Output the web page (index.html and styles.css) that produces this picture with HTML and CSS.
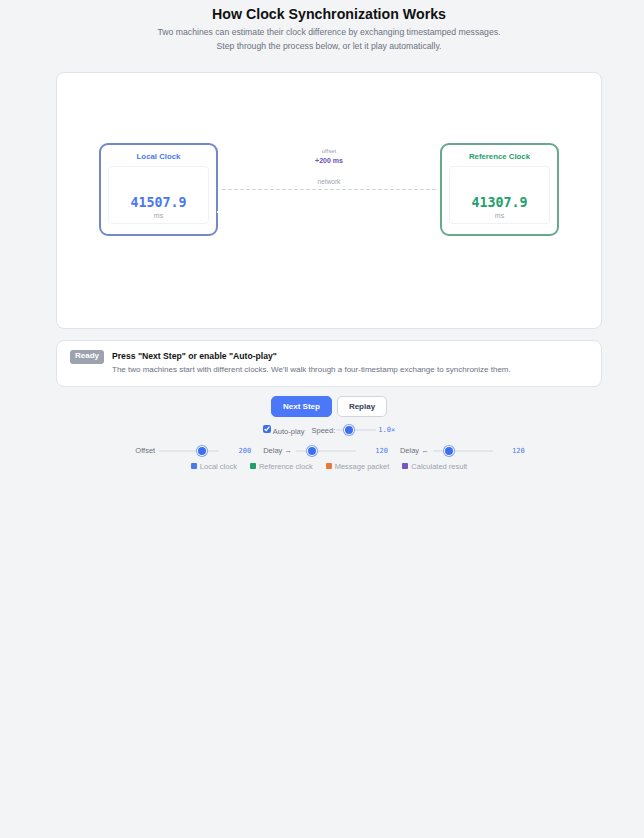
FILE: index.html
```html
<!DOCTYPE html>
<html lang="en">

<head>
    <meta charset="UTF-8" />
    <title>How Clock Synchronization Works</title>
    <link rel="stylesheet" href="styles.css">
</head>

<body>
    <div class="container">
        <h1>How Clock Synchronization Works</h1>
        <p class="subtitle">Two machines can estimate their clock difference by exchanging timestamped messages.<br>Step through the process below, or let it play automatically.</p>

        <div class="stage">
            <div class="clock local">
                <div class="clock-name">Local Clock</div>
                <div class="clock-face">
                    <div class="clock-time">41507.9</div>
                    <div class="clock-unit">ms</div>
                </div>
                <span class="packet"></span>
            </div>

            <div class="link">
                <div class="offset-label">offset</div>
                <div class="offset-value">+200 ms</div>
                <div class="network-label">network</div>
                <div class="network-line"></div>
            </div>

            <div class="clock reference">
                <div class="clock-name">Reference Clock</div>
                <div class="clock-face">
                    <div class="clock-time">41307.9</div>
                    <div class="clock-unit">ms</div>
                </div>
            </div>
        </div>

        <div class="status">
            <span class="badge">Ready</span>
            <div>
                <div class="status-title">Press "Next Step" or enable "Auto-play"</div>
                <div class="status-text">The two machines start with different clocks. We'll walk through a four-timestamp exchange to synchronize them.</div>
            </div>
        </div>

        <div class="buttons">
            <button class="btn primary">Next Step</button>
            <button class="btn">Replay</button>
        </div>

        <div class="row autoplay">
            <label class="check"><input type="checkbox" checked><span>Auto-play</span></label>
            <label class="speed">Speed:</label>
            <input class="slider short" type="range" min="0.25" max="3" step="0.25" value="1">
            <span class="value">1.0×</span>
        </div>

        <div class="row sliders">
            <div class="slider-group">
                <label>Offset</label>
                <input class="slider" type="range" min="0" max="270" value="200">
                <span class="value wide">200</span>
            </div>
            <div class="slider-group">
                <label>Delay →</label>
                <input class="slider" type="range" min="0" max="520" value="120">
                <span class="value wide">120</span>
            </div>
            <div class="slider-group">
                <label>Delay ←</label>
                <input class="slider" type="range" min="0" max="520" value="120">
                <span class="value wide">120</span>
            </div>
        </div>

        <div class="row legend">
            <span class="legend-item"><i class="swatch blue"></i>Local clock</span>
            <span class="legend-item"><i class="swatch green"></i>Reference clock</span>
            <span class="legend-item"><i class="swatch orange"></i>Message packet</span>
            <span class="legend-item"><i class="swatch purple"></i>Calculated result</span>
        </div>
    </div>
</body>

</html>
```

FILE: styles.css
```css
* {
    box-sizing: border-box;
}

body {
    margin: 0;
    background-color: #f3f4f6;
    color: #111;
    font-family: 'Liberation Sans', Arial, sans-serif;
    padding: 5px 0 0 56px;
}

.container {
    width: 546px;
    text-align: center;
}

h1 {
    font-size: 14.2px;
    line-height: 18px;
    margin: 0 0 3px;
}

.subtitle {
    font-size: 8.67px;
    line-height: 13.5px;
    color: #6b7280;
    margin: 0 0 19px;
}

.stage {
    height: 257px;
    background: #fff;
    border: 1px solid #e0e3e9;
    border-radius: 8px;
    padding: 70px 42px 0;
    display: flex;
    align-items: flex-start;
}

.clock {
    position: relative;
    width: 119px;
    height: 93px;
    border: 2px solid;
    border-radius: 9px;
    padding: 6px 7px 0;
    flex: none;
}

.clock.local {
    border-color: #7388c9;
    color: #4a78f0;
}

.clock.reference {
    border-color: #66a98b;
    color: #22a06b;
}

.clock-name {
    font-size: 7.8px;
    font-weight: bold;
    line-height: 11px;
    margin-bottom: 4px;
}

.clock-face {
    height: 58px;
    border: 1px solid #eef1f6;
    border-radius: 4px;
    padding-top: 27px;
}

.clock-time {
    font-family: 'DejaVu Sans Mono', monospace;
    font-size: 13.3px;
    font-weight: bold;
    line-height: 17px;
}

.clock-unit {
    font-size: 7px;
    line-height: 8px;
    margin-top: 1px;
    color: #9ca3af;
}

.packet {
    position: absolute;
    top: 66px;
    right: -2px;
    width: 1px;
    height: 2px;
    background: #fff;
}

.link {
    flex: 1;
    padding: 5px 4px 0;
}

.offset-label {
    font-size: 6px;
    line-height: 7px;
    color: #9ca3af;
}

.offset-value {
    font-size: 7px;
    font-weight: bold;
    line-height: 10px;
    margin-top: 1px;
    color: #6b4fbb;
}

.network-label {
    font-size: 6.5px;
    line-height: 8px;
    color: #9ca3af;
    margin-top: 12px;
}

.network-line {
    height: 1px;
    margin-top: 3px;
    background: repeating-linear-gradient(90deg, #d1d5db 0 4px, transparent 4px 6px);
}

.status {
    display: flex;
    gap: 8px;
    align-items: flex-start;
    height: 47px;
    margin-top: 11px;
    padding: 9px 13px;
    background: #fff;
    border: 1px solid #e0e3e9;
    border-radius: 8px;
    text-align: left;
}

.badge {
    flex: none;
    width: 34px;
    height: 14px;
    background: #9ca3af;
    color: #fff;
    border-radius: 3px;
    font-size: 8px;
    font-weight: bold;
    line-height: 11px;
    text-align: center;
}

.status-title {
    font-size: 8.63px;
    font-weight: bold;
    line-height: 13px;
}

.status-text {
    font-size: 8px;
    line-height: 13px;
    color: #6b7280;
}

.buttons {
    display: flex;
    justify-content: center;
    gap: 5px;
    margin-top: 9px;
}

.btn {
    height: 21px;
    width: 50px;
    padding: 0;
    font-family: inherit;
    font-size: 8px;
    font-weight: bold;
    color: #374151;
    background: #fff;
    border: 1px solid #d1d5db;
    border-radius: 5px;
}

.btn.primary {
    width: 61px;
    background: #4a78f8;
    border-color: #4a78f8;
    color: #fff;
}

.row {
    display: flex;
    justify-content: center;
    align-items: center;
}

.autoplay {
    height: 12px;
    margin-top: 7px;
    font-size: 7.5px;
    color: #6b7280;
}

.check {
    display: flex;
    align-items: center;
    gap: 2px;
    margin-right: 7px;
}

.check input {
    width: 8px;
    height: 8px;
    margin: -2px 0 0;
    accent-color: #3b6ff0;
}

.check span {
    margin-top: 2px;
}

.speed {
    margin-right: 1px;
}

.slider {
    -webkit-appearance: none;
    appearance: none;
    width: 60px;
    height: 2px;
    margin: 0;
    border-radius: 1px;
    background: #e2e5ea;
}

.slider.short {
    width: 40px;
}

.slider::-webkit-slider-thumb {
    -webkit-appearance: none;
    width: 8px;
    height: 8px;
    border-radius: 50%;
    background: #3b6ff0;
    box-shadow: 0 0 0 1px #fff, 0 0 0 2px #7d9ff6;
}

.value {
    font-family: 'DejaVu Sans Mono', monospace;
    font-size: 7px;
    color: #4a78f0;
    margin-left: 2px;
}

.value.wide {
    width: 32px;
    margin-left: 0;
    text-align: right;
}

.sliders {
    gap: 12px;
    margin-top: 6px;
    height: 17px;
    padding-left: 2px;
}

.slider-group {
    display: flex;
    align-items: center;
    gap: 4px;
    font-size: 7.5px;
    color: #6b7280;
}

.slider-group .value {
    margin-left: -4px;
}

.legend {
    gap: 13px;
    height: 14px;
    font-size: 7.5px;
    color: #9ca3af;
}

.legend-item {
    display: flex;
    align-items: center;
    gap: 3px;
}

.swatch {
    width: 6px;
    height: 6px;
    border-radius: 1px;
}

.swatch.blue {
    background: #4a78f0;
}

.swatch.green {
    background: #22a06b;
}

.swatch.orange {
    background: #e8793a;
}

.swatch.purple {
    background: #7a55c0;
}
```
